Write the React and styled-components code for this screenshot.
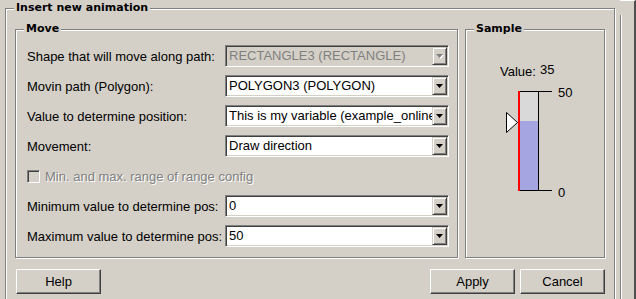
import React from "react";
import styled, { createGlobalStyle } from "styled-components";

const GlobalStyle = createGlobalStyle`
  body {
    margin: 0;
    background: #d4d0c8;
    font-family: "Liberation Sans", Arial, sans-serif;
    font-size: 13px;
    color: #000;
  }
`;

const Screen = styled.div`
  display: flex;
  width: 636px;
  height: 299px;
  overflow: hidden;
  background: #d4d0c8;
`;

const Dialog = styled.div`
  width: 620px;
  padding: 8px 0 0 5px;
  box-sizing: border-box;
`;

const Edge = styled.div`
  width: 16px;
  display: flex;
  flex-direction: column;
  border-top: 1px solid #fff;
  border-right: 2px solid #505050;
  box-sizing: border-box;
`;

const EdgeRail = styled.div`
  flex: 1;
  margin-top: 14px;
  border-left: 1px solid #808080;
  box-shadow: inset 1px 0 #fff;
`;

const Group = styled.div`
  position: relative;
  box-sizing: border-box;
  width: ${(p) => p.$w}px;
  height: ${(p) => p.$h}px;
  border: 1px solid #808080;
  box-shadow: inset 1px 1px #fff, 1px 1px #fff;
  padding: ${(p) => p.$pad || "0"};
`;

const GroupTitle = styled.span`
  position: absolute;
  top: -8px;
  left: 8px;
  padding: 0 2px;
  background: #d4d0c8;
  font-family: "DejaVu Sans", sans-serif;
  font-weight: bold;
  font-size: 11px;
  line-height: 13px;
`;

const Panels = styled.div`
  display: flex;
  gap: 7px;
`;

const FormGrid = styled.div`
  display: grid;
  grid-template-columns: 198px 224px;
  grid-auto-rows: 22px;
  row-gap: 8px;
  align-items: center;
`;

const Label = styled.span`
  white-space: nowrap;
`;

const Combo = styled.div`
  display: flex;
  align-items: center;
  box-sizing: border-box;
  height: 22px;
  padding: 1px;
  border: 1px solid;
  border-color: #808080 #fff #fff #808080;
  box-shadow: inset 1px 1px #404040, inset -1px -1px #d4d0c8;
  background: ${(p) => (p.$disabled ? "#d4d0c8" : "#fff")};
  color: ${(p) => (p.$disabled ? "#808080" : "#000")};
`;

const ComboText = styled.span`
  flex: 1;
  overflow: hidden;
  white-space: nowrap;
  padding-left: 2px;
  line-height: 18px;
`;

const DropButton = styled.div`
  display: flex;
  align-items: center;
  justify-content: center;
  box-sizing: border-box;
  width: 15px;
  height: 18px;
  border: 1px solid;
  border-color: #d4d0c8 #404040 #404040 #d4d0c8;
  box-shadow: inset 1px 1px #fff, inset -1px -1px #808080;
  background: #d4d0c8;
`;

const CheckRow = styled.div`
  grid-column: 1 / span 2;
  display: flex;
  align-items: center;
  gap: 5px;
  color: #808080;
  text-shadow: 1px 1px #fff;
`;

const CheckBox = styled.span`
  box-sizing: border-box;
  width: 13px;
  height: 13px;
  border: 1px solid;
  border-color: #808080 #fff #fff #808080;
  box-shadow: inset 1px 1px #404040, inset -1px -1px #d4d0c8;
  background: #d4d0c8;
`;

const SampleBody = styled.div`
  display: flex;
  flex-direction: column;
  align-items: flex-start;
`;

const ValueRow = styled.div`
  display: flex;
  gap: 4px;
  line-height: 15px;
`;

const ValueNumber = styled.span`
  margin-top: -2px;
`;

const Gauge = styled.svg`
  display: block;
  margin-top: 7px;
  font-family: "Liberation Sans", Arial, sans-serif;
  font-size: 13px;
`;

const ButtonRow = styled.div`
  display: flex;
  gap: 5px;
  margin-top: 11px;
  padding-left: 1px;
`;

const Button = styled.button`
  box-sizing: border-box;
  width: 85px;
  height: 25px;
  padding: 0;
  margin-left: ${(p) => (p.$push ? "auto" : "0")};
  font-family: "Liberation Sans", Arial, sans-serif;
  font-size: 13px;
  color: #000;
  background: #d4d0c8;
  border: 1px solid;
  border-color: #fff #404040 #404040 #fff;
  box-shadow: inset -1px -1px #808080;
  cursor: pointer;
`;

const Arrow = ({ disabled }) => (
  <svg width="8" height="5" viewBox="0 0 8 5">
    {disabled && <polygon points="1,1 8,1 4.5,5" fill="#fff" />}
    <polygon points="0,0 7,0 3.5,4" fill={disabled ? "#808080" : "#000"} />
  </svg>
);

const Select = ({ value, disabled }) => (
  <Combo $disabled={disabled}>
    <ComboText>{value}</ComboText>
    <DropButton>
      <Arrow disabled={disabled} />
    </DropButton>
  </Combo>
);

const rows = [
  ["Shape that will move along path:", "RECTANGLE3 (RECTANGLE)", true],
  ["Movin path (Polygon):", "POLYGON3 (POLYGON)"],
  ["Value to determine position:", "This is my variable (example_online)"],
  ["Movement:", "Draw direction"],
];

const rangeRows = [
  ["Minimum value to determine pos:", "0"],
  ["Maximum value to determine pos:", "50"],
];

const value = 35;
const max = 50;

const App = () => {
  const fillTop = 5 + 100 * (1 - value / max);
  return (
    <>
      <GlobalStyle />
      <Screen>
        <Dialog>
          <Group $w={610} $h={310} $pad="20px 9px 0 9px">
            <GroupTitle>Insert new animation</GroupTitle>
            <Panels>
              <Group $w={443} $h={229} $pad="15px 8px 0 11px">
                <GroupTitle>Move</GroupTitle>
                <FormGrid>
                  {rows.map(([label, val, dis]) => (
                    <React.Fragment key={label}>
                      <Label>{label}</Label>
                      <Select value={val} disabled={dis} />
                    </React.Fragment>
                  ))}
                  <CheckRow>
                    <CheckBox />
                    <span>Min. and max. range of range config</span>
                  </CheckRow>
                  {rangeRows.map(([label, val]) => (
                    <React.Fragment key={label}>
                      <Label>{label}</Label>
                      <Select value={val} />
                    </React.Fragment>
                  ))}
                </FormGrid>
              </Group>
              <Group $w={140} $h={229} $pad="34px 0 0 34px">
                <GroupTitle>Sample</GroupTitle>
                <SampleBody>
                  <ValueRow>
                    <span>Value:</span>
                    <ValueNumber>{value}</ValueNumber>
                  </ValueRow>
                  <Gauge width="80" height="115" viewBox="0 0 80 115">
                    <rect x="18" y="5" width="20" height="100" fill="#d9d9d9" />
                    <rect x="18" y={fillTop} width="20" height={105 - fillTop} fill="#a5a5e1" />
                    <line x1="18" y1="5.5" x2="52" y2="5.5" stroke="#000" />
                    <line x1="18" y1="104.5" x2="52" y2="104.5" stroke="#000" />
                    <line x1="38.5" y1="5" x2="38.5" y2="105" stroke="#000" />
                    <rect x="18" y="5" width="2" height="100" fill="#ff0000" />
                    <polygon points="6.5,26.5 17.5,36.5 6.5,46.5" fill="#fff" stroke="#000" />
                    <text x="58" y="11">50</text>
                    <text x="58" y="111">0</text>
                  </Gauge>
                </SampleBody>
              </Group>
            </Panels>
            <ButtonRow>
              <Button>Help</Button>
              <Button $push>Apply</Button>
              <Button>Cancel</Button>
            </ButtonRow>
          </Group>
        </Dialog>
        <Edge>
          <EdgeRail />
        </Edge>
      </Screen>
    </>
  );
};

export default App;
